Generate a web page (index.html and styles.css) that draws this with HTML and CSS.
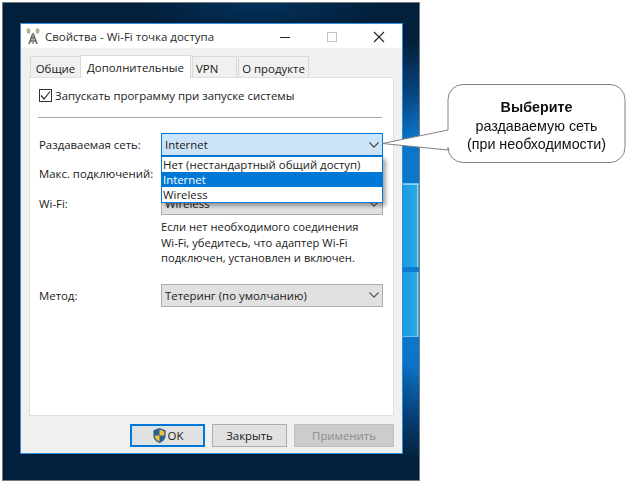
FILE: index.html
```html
<!DOCTYPE html>
<html lang="ru">
<head>
<meta charset="utf-8">
<title>Wi-Fi точка доступа</title>
<link rel="stylesheet" href="styles.css">
</head>
<body>
<div class="stage">
  <div class="desktop">
    <div class="logo-pane logo-top"></div>
    <div class="logo-pane logo-bottom"></div>
    <section class="dialog">
      <header class="titlebar">
        <svg class="app-icon" width="14" height="17" viewBox="0 0 14 17">
          <path d="M7 5L3 16M7 5L11 16M4.500 13H9.500M5.500 10H8.500" stroke="#5f635f" stroke-width="1.500" fill="none"/>
          <path d="M7 5V16" stroke="#8a8d8a" stroke-width="1.500"/>
          <ellipse cx="2.500" cy="3" rx="2" ry="2.800" fill="#a8b98a"/>
          <ellipse cx="11.500" cy="3" rx="2" ry="2.800" fill="#a8b98a"/>
        </svg>
        <span class="title">Свойства - Wi-Fi точка доступа</span>
        <div class="win-buttons">
          <svg width="12" height="12" viewBox="0 0 12 12"><path d="M1 6.500H11" stroke="#222" stroke-width="1"/></svg>
          <svg width="12" height="12" viewBox="0 0 12 12"><rect x="1.500" y="1.500" width="9" height="9" fill="none" stroke="#c4c4c4"/></svg>
          <svg width="12" height="12" viewBox="0 0 12 12"><path d="M1 1L11 11M11 1L1 11" stroke="#222" stroke-width="1.100"/></svg>
        </div>
      </header>
      <div class="client">
        <nav class="tabs">
          <span class="tab tab-general">Общие</span>
          <span class="tab tab-active">Дополнительные</span>
          <span class="tab tab-vpn">VPN</span>
          <span class="tab tab-about">О продукте</span>
        </nav>
        <div class="panel">
          <label class="check-row">
            <span class="checkbox">
              <svg width="11" height="11" viewBox="0 0 11 11"><path d="M1 5.500L4 9L10 1.500" fill="none" stroke="#333" stroke-width="1.200"/></svg>
            </span>
            Запускать программу при запуске системы
          </label>
          <hr class="sep">
          <div class="form-row row-net">
            <span class="label">Раздаваемая сеть:</span>
            <div class="combo combo-open">
              <span>Internet</span>
              <svg class="chev" width="10" height="6" viewBox="0 0 10 6"><path d="M.5 .5L5 5.200L9.500 .5" fill="none" stroke="#444" stroke-width="1.100"/></svg>
              <ul class="dropdown">
                <li>Нет (нестандартный общий доступ)</li>
                <li class="selected">Internet</li>
                <li>Wireless</li>
              </ul>
            </div>
          </div>
          <div class="form-row row-max">
            <span class="label">Макс. подключений:</span>
          </div>
          <div class="form-row row-wifi">
            <span class="label">Wi-Fi:</span>
            <div class="combo">
              <span>Wireless</span>
              <svg class="chev" width="10" height="6" viewBox="0 0 10 6"><path d="M.5 .5L5 5.200L9.500 .5" fill="none" stroke="#555" stroke-width="1.100"/></svg>
            </div>
          </div>
          <p class="hint">Если нет необходимого соединения<br>Wi-Fi, убедитесь, что адаптер Wi-Fi<br>подключен, установлен и включен.</p>
          <div class="form-row row-method">
            <span class="label">Метод:</span>
            <div class="combo">
              <span>Тетеринг (по умолчанию)</span>
              <svg class="chev" width="10" height="6" viewBox="0 0 10 6"><path d="M.5 .5L5 5.200L9.500 .5" fill="none" stroke="#555" stroke-width="1.100"/></svg>
            </div>
          </div>
        </div>
        <footer class="buttons">
          <button class="btn btn-default">
            <svg width="15" height="17" viewBox="0 0 16 18">
              <path d="M8 1L14.500 3.500V9C14.500 13 11.500 15.500 8 17C4.500 15.500 1.500 13 1.500 9V3.500Z" fill="#2a5c96"/>
              <path d="M8 2.500L13 4.500V9H8Z" fill="#f2c230"/>
              <path d="M8 9V15.500C5.500 14.300 3 12.500 3 9H8Z" fill="#f2c230"/>
            </svg>OK</button>
          <button class="btn btn-close">Закрыть</button>
          <button class="btn btn-apply" disabled>Применить</button>
        </footer>
      </div>
    </section>
  </div>
  <aside class="callout">
    <svg class="callout-shape" width="246" height="82" viewBox="0 0 246 82">
      <path d="M82 .5H228A15 15 0 0 1 243 15.500V63.500A15 15 0 0 1 228 78.500H81A15 15 0 0 1 66 63.500V66L.500 59.500L66 46V15.500A15 15 0 0 1 81 .5Z" fill="#fff" stroke="#808080"/>
    </svg>
    <div class="callout-text"><b>Выберите</b><br>раздаваемую сеть<br>(при необходимости)</div>
  </aside>
</div>
</body>
</html>
```
FILE: styles.css
```css
* { box-sizing: border-box; }
html, body { margin: 0; padding: 0; background: #fff; }
body { width: 626px; height: 482px; overflow: hidden; font-family: "Open Sans", "Noto Sans", sans-serif; }
.stage { position: relative; width: 626px; height: 482px; padding: 2px 0 0 2px; filter: blur(.3px); }

.desktop {
  position: relative;
  width: 418px;
  height: 479px;
  padding: 20px 0 0 17px;
  border: 1px solid #7a7a7a;
  overflow: hidden;
  background:
    radial-gradient(ellipse 70px 210px at 100% 52%, #0d7fd6 0%, #0b74c8 55%, rgba(8,80,150,.7) 78%, rgba(4,40,80,0) 100%),
    radial-gradient(ellipse 120px 30px at 62% 0, #04325c 0%, rgba(4,50,92,0) 100%),
    #02203c;
}
.logo-pane {
  position: absolute;
  right: 0;
  width: 16px;
  background: linear-gradient(90deg, #1a9be0 0%, #2aa9e6 85%, #a6def7 92%, #1477c4 100%);
}
.logo-top { top: 180px; height: 84px; border-top: 1px solid #6cc4ee; box-shadow: inset 0 10px 0 -9px #8fd4f5; }
.logo-bottom { top: 269px; height: 65px; border-bottom: 1px solid #6cc4ee; }

.dialog {
  position: relative;
  width: 383px;
  height: 431px;
  background: #f0f0f0;
  border: 1px solid #2c8fde;
  display: flex;
  flex-direction: column;
  font-size: 11.400px;
  color: #1a1a1a;
}
.titlebar {
  height: 24px;
  flex: none;
  background: #fff;
  display: flex;
  align-items: center;
  padding: 1px 17px 0 5px;
}
.app-icon { margin-right: 5px; }
.title { color: #2a2a2a; font-size: 11.500px; }
.win-buttons { margin-left: auto; display: flex; gap: 35px; align-items: center; }

.client { flex: 1; display: flex; flex-direction: column; padding: 7px 8px 0 8px; }
.tabs { display: flex; height: 22px; flex: none; align-items: flex-end; padding-left: 1px; position: relative; z-index: 1; }
.tab {
  height: 21px;
  background: #f0f0f0;
  border: 1px solid #d9d9d9;
  border-bottom: none;
  display: flex; align-items: center; justify-content: center;
  padding-top: 2px;
  margin-right: 1px;
}
.tab-general { width: 50px; margin-right: 0; border-right: none; }
.tab-active { width: 111px; height: 23px; background: #fff; margin-bottom: -1px; padding-top: 0; }
.tab-vpn { width: 45px; justify-content: flex-start; padding-left: 3px; }
.tab-about { width: 71px; }

.panel {
  width: 365px;
  height: 339px;
  flex: none;
  background: #fff;
  border: 1px solid #dfdfdf;
  position: relative;
  padding: 9px 10px 0 9px;
}
.check-row { display: flex; align-items: center; gap: 3px; height: 16px; }
.checkbox {
  width: 13px; height: 13px; border: 1px solid #333; background: #fff;
  display: flex; align-items: center; justify-content: center;
}
.sep { height: 1px; margin: 14px 0 15px -1px; border: none; background: #a6a6a6; width: 344px; }

.form-row { display: flex; align-items: center; }
.label { width: 122px; flex: none; }
.row-net { height: 23px; }
.row-max { height: 16px; margin-top: 9px; }
.row-wifi { height: 23px; margin-top: 11px; }
.row-method { height: 23px; margin-top: 18px; }

.combo {
  position: relative;
  width: 222px;
  height: 23px;
  background: #e1e1e1;
  border: 1px solid #adadad;
  display: flex;
  align-items: center;
  justify-content: space-between;
  padding: 0 3px 0 3px;
}
.combo-open { background: #cce4f7; border-color: #0078d7; }
.dropdown {
  position: absolute;
  z-index: 3;
  left: -1px;
  top: 22px;
  width: 222px;
  margin: 0;
  padding: 0;
  list-style: none;
  background: #fff;
  border: 1px solid #0078d7;
  box-shadow: 3px 3px 4px rgba(0,0,0,.35);
}
.dropdown li { height: 15px; line-height: 15px; padding-left: 1px; color: #1a1a1a; }
.dropdown li.selected { background: #0078d7; color: #fff; }

.hint { margin: 4px 0 0 122px; line-height: 15.500px; font-size: 11.200px; }

.buttons { display: flex; gap: 7px; margin: 8px 0 0 101px; }
.btn {
  height: 23px;
  padding: 0;
  background: #e1e1e1;
  border: 1px solid #adadad;
  font: inherit;
  color: #1a1a1a;
  display: flex; align-items: center; justify-content: center;
}
.btn-default { width: 75px; border: 2px solid #0078d7; gap: 1px; }
.btn-close { width: 75px; }
.btn-apply { width: 100px; background: #ccc; border-color: #bfbfbf; color: #8c8c8c; }

.callout { position: absolute; left: 382px; top: 84px; width: 246px; height: 82px; }
.callout-shape { position: absolute; left: 0; top: 0; }
.callout-text {
  position: absolute;
  left: 66px; top: 14px;
  width: 177px;
  text-align: center;
  font: 14.300px/18.500px "Liberation Sans", Arial, sans-serif;
  color: #111;
}
```
